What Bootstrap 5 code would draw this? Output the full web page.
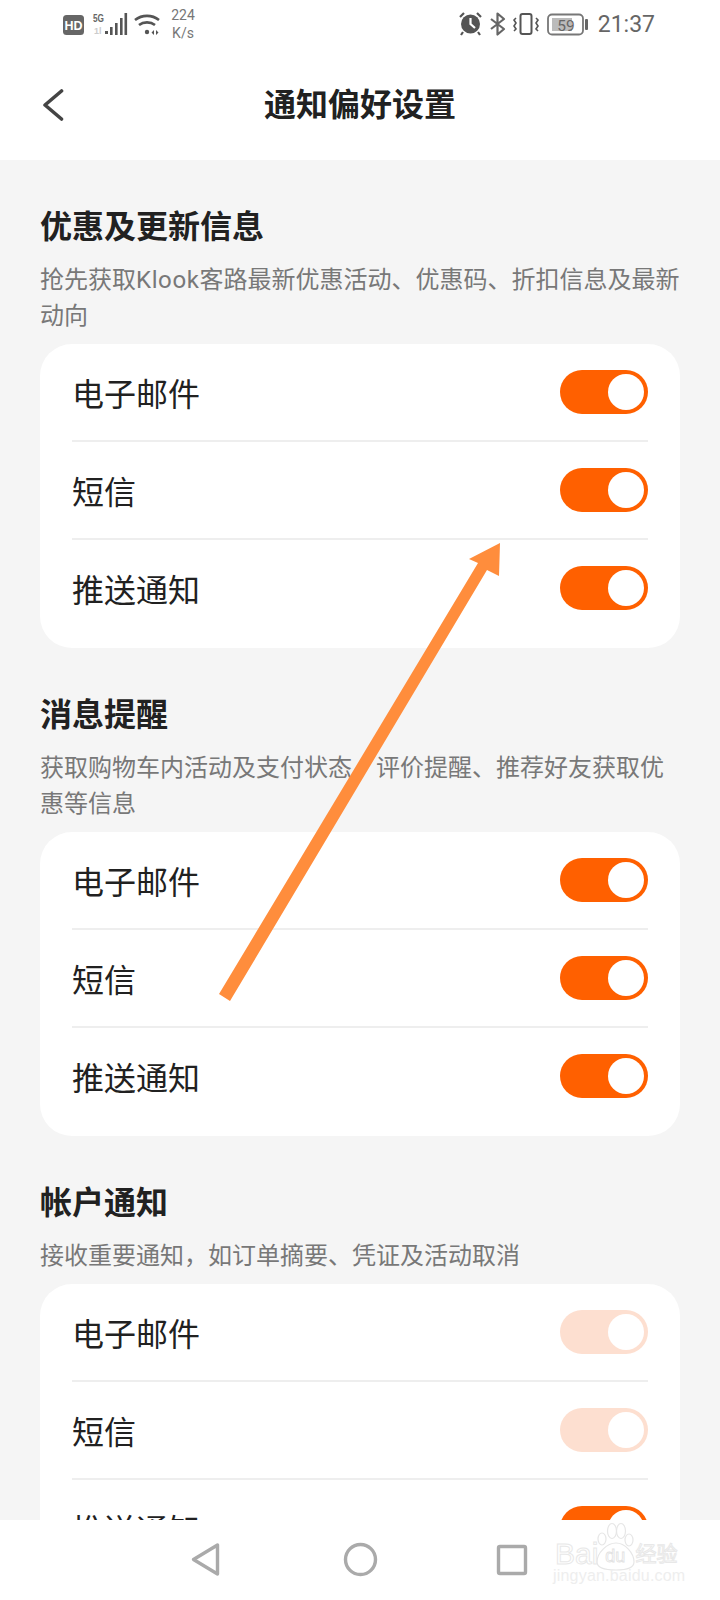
<!doctype html>
<html lang="zh"><head><meta charset="utf-8">
<link href="https://cdn.jsdelivr.net/npm/bootstrap@5.3.0/dist/css/bootstrap.min.css" rel="stylesheet">
<style>
html,body{height:1600px;overflow:hidden}
body{font-family:Roboto,"Noto Sans CJK SC","Noto Sans",sans-serif;background:#f5f5f5;color:#212121}
.stage{width:720px;height:1600px;position:relative;overflow:hidden}
.topzone{height:160px;background:#fff}
.sbar{height:50px;padding:6px 65px 0 63px;color:#666;font-family:Roboto,sans-serif}
.ico-left{width:101px;height:28px;margin-top:4px}
.ico-right{width:135px;height:28px;margin-top:4px}
.speed{font-size:14px;line-height:18px;width:28px;text-align:center;color:#777;margin-left:5px}
.clock{font-size:23px;line-height:28px;color:#666;margin-left:9px;margin-top:5px}
.hdr{height:110px;padding-left:43px;position:relative}
.back-ico{display:block;padding-top:39px;height:71px;width:22px;box-sizing:border-box}
.hdr-title{position:absolute;left:0;right:0;top:33px;text-align:center;font-size:32px;line-height:44px;font-weight:700;color:#212121}
.scroll{height:1360px;overflow:hidden;padding:0 40px}
.sect-title{font-size:32px;line-height:44px;font-weight:700;margin:0 0 13px;color:#212121}
.sect-sub{font-size:24px;line-height:36px;color:#787878;margin:0 0 10px}
.latin-word{letter-spacing:.6px}
.sect{padding-top:45px}
.pref-card{border:0;border-radius:32px;background:#fff;padding:0 32px 12px;--bs-card-bg:#fff}
.pref-list{--bs-list-group-border-width:2px;--bs-list-group-border-color:#eee;--bs-list-group-bg:transparent}
.pref-row{height:98px;padding:0;font-size:32px;color:#212121}
.pref-row:last-child{height:96px}
.row-label{padding-top:6px}
.tgl{width:88px;height:44px;border-radius:22px;background:#ff6000;position:relative;flex:none}
.tgl::after{content:"";position:absolute;right:4px;top:4px;width:36px;height:36px;border-radius:50%;background:#fff}
.tgl-off{background:#fddfd0}
.botnav{position:absolute;left:0;right:0;bottom:0;height:80px;background:#fff}
.nav-ico{position:absolute;top:0;left:0}
.arrow-over{position:absolute;left:0;top:0;pointer-events:none}
.wm{position:absolute;left:555px;top:1538px;width:130px;height:32px;color:#fff;-webkit-text-stroke:1px #e8e8e8;white-space:nowrap;font-family:"Liberation Sans","Noto Sans CJK SC",sans-serif}
.wm-bai{font-size:30px;line-height:32px}
.wm-du{font-size:18px;line-height:32px;margin:0 10px 0 7px;padding-top:4px;-webkit-text-stroke:.8px #e2e2e2}
.wm-cn{font-size:21px;line-height:32px}
.wm-sub{position:absolute;left:553px;top:1567px;font-family:"Liberation Sans",sans-serif;color:#eee;font-size:16px;line-height:18px;white-space:nowrap;letter-spacing:.2px}
</style></head>
<body>
<div class="stage">
  <div class="topzone">
    <div class="sbar d-flex justify-content-between align-items-start">
      <div class="d-flex align-items-start">
        <svg class="ico-left" viewBox="0 0 101 28">
          <rect x="0" y="5" width="21" height="20" rx="3.500" fill="#666"/>
          <text x="10.500" y="20" text-anchor="middle" font-family="Liberation Sans" font-weight="700" font-size="12.500" fill="#fff">HD</text>
          <text x="30" y="12" font-family="Liberation Sans" font-weight="700" font-size="11" textLength="11" lengthAdjust="spacingAndGlyphs" fill="#666">5G</text>
          <text x="31" y="24" font-family="Liberation Sans" font-weight="700" font-size="9" fill="#ccc">1l</text>
          <rect x="42" y="21" width="3" height="3" fill="#555"/><rect x="47" y="17" width="2.600" height="8" fill="#555"/><rect x="52" y="13" width="2.600" height="12" fill="#555"/><rect x="57" y="8" width="2.600" height="17" fill="#555"/><rect x="61.500" y="3" width="2.600" height="22" fill="#555"/>
          <path d="M72 10c7-5.500 17-5.500 24 0M76 15c4.500-3.500 11.500-3.500 16 0" fill="none" stroke="#555" stroke-width="2.600"/>
          <circle cx="84" cy="22" r="2.200" fill="#555"/>
          <path d="M91 20v5l-2.500-2.500zM93 20v5l2.500-2.500z" fill="#555"/>
        </svg>
        <div class="speed">224<br>K/s</div>
      </div>
      <div class="d-flex align-items-start">
        <svg class="ico-right" viewBox="0 0 135 28">
          <circle cx="16.500" cy="14" r="9.500" fill="#555"/>
          <path d="M16.500 8v6l4.500 4" fill="none" stroke="#fff" stroke-width="2.200"/>
          <path d="M6 7l4-4M27 7l-4-4M9 22l-2 3M24 22l2 3" stroke="#555" stroke-width="2.200" fill="none"/>
          <path d="M37 9l13 10-6.500 5.500V3.500L50 9 37 19" fill="none" stroke="#666" stroke-width="2.200" stroke-linejoin="round"/>
          <rect x="66.500" y="4" width="11" height="20" rx="2" fill="none" stroke="#555" stroke-width="2"/>
          <path d="M62 8l-2 2 2 3-2 3 2 3-2 2M82 8l2 2-2 3 2 3-2 3 2 2" fill="none" stroke="#555" stroke-width="1.600"/>
          <rect x="94" y="4.500" width="35" height="20" rx="4" fill="none" stroke="#777" stroke-width="1.800"/>
          <rect x="98" y="8" width="20" height="13" fill="#bbb"/>
          <text x="112" y="20.500" text-anchor="middle" font-family="Roboto" font-size="15.500" fill="#666">59</text>
          <rect x="131" y="9" width="3" height="11" rx="1" fill="#666"/>
        </svg>
        <span class="clock">21:37</span>
      </div>
    </div>
    <div class="hdr">
      <svg class="back-ico" viewBox="0 0 22 32"><path d="M18.500 2L2 16l16.500 14" fill="none" stroke="#444" stroke-width="3.600" stroke-linecap="round" stroke-linejoin="round"/></svg>
      <div class="hdr-title">通知偏好设置</div>
    </div>
  </div>
  <div class="scroll">
    <section class="sect">
      <h2 class="sect-title">优惠及更新信息</h2>
      <p class="sect-sub">抢先获取<span class="latin-word">Klook</span>客路最新优惠活动、优惠码、折扣信息及最新动向</p>
      <div class="card pref-card"><div class="list-group list-group-flush pref-list">
        <div class="list-group-item pref-row d-flex justify-content-between align-items-center"><span class="row-label">电子邮件</span><span class="tgl"></span></div>
        <div class="list-group-item pref-row d-flex justify-content-between align-items-center"><span class="row-label">短信</span><span class="tgl"></span></div>
        <div class="list-group-item pref-row d-flex justify-content-between align-items-center"><span class="row-label">推送通知</span><span class="tgl"></span></div>
      </div></div>
    </section>
    <section class="sect">
      <h2 class="sect-title">消息提醒</h2>
      <p class="sect-sub">获取购物车内活动及支付状态、评价提醒、推荐好友获取优惠等信息</p>
      <div class="card pref-card"><div class="list-group list-group-flush pref-list">
        <div class="list-group-item pref-row d-flex justify-content-between align-items-center"><span class="row-label">电子邮件</span><span class="tgl"></span></div>
        <div class="list-group-item pref-row d-flex justify-content-between align-items-center"><span class="row-label">短信</span><span class="tgl"></span></div>
        <div class="list-group-item pref-row d-flex justify-content-between align-items-center"><span class="row-label">推送通知</span><span class="tgl"></span></div>
      </div></div>
    </section>
    <section class="sect">
      <h2 class="sect-title">帐户通知</h2>
      <p class="sect-sub">接收重要通知，如订单摘要、凭证及活动取消</p>
      <div class="card pref-card"><div class="list-group list-group-flush pref-list">
        <div class="list-group-item pref-row d-flex justify-content-between align-items-center"><span class="row-label">电子邮件</span><span class="tgl tgl-off"></span></div>
        <div class="list-group-item pref-row d-flex justify-content-between align-items-center"><span class="row-label">短信</span><span class="tgl tgl-off"></span></div>
        <div class="list-group-item pref-row d-flex justify-content-between align-items-center"><span class="row-label">推送通知</span><span class="tgl"></span></div>
      </div></div>
    </section>
  </div>
  <svg class="arrow-over" width="720" height="1600" viewBox="0 0 720 1600"><polygon points="219,994 230,1001 487,570 499,576 500,543 469,559 478,563" fill="#ff8d3c"/></svg>
  <div class="botnav">
    <svg class="nav-ico" width="720" height="80" viewBox="0 1520 720 80">
      <path d="M217.500 1545v29l-24-14.500z" fill="none" stroke="#aaa" stroke-width="3.400" stroke-linejoin="round"/>
      <circle cx="360.500" cy="1559.500" r="15" fill="none" stroke="#aaa" stroke-width="3.400"/>
      <rect x="498.500" y="1546.500" width="27" height="27" rx="1.500" fill="none" stroke="#aaa" stroke-width="3.400"/>
      <g fill="#fff" stroke="#e6e6e6" stroke-width="1.200">
        <ellipse cx="602" cy="1539" rx="4" ry="6"/><ellipse cx="612" cy="1531" rx="4.500" ry="7.500"/><ellipse cx="621" cy="1531" rx="4.500" ry="7.500"/><ellipse cx="629" cy="1540" rx="4" ry="6"/>
        <path d="M597 1562c0-9 10-19 19-19s18 10 18 19c0 6-6 8-18 8s-19-2-19-8z"/>
      </g>
    </svg>
  </div>
  <div class="wm d-flex align-items-center"><span class="wm-bai">Bai</span><span class="wm-du">du</span><span class="wm-cn">经验</span></div>
  <div class="wm-sub">jingyan.baidu.com</div>
</div>
</body></html>
